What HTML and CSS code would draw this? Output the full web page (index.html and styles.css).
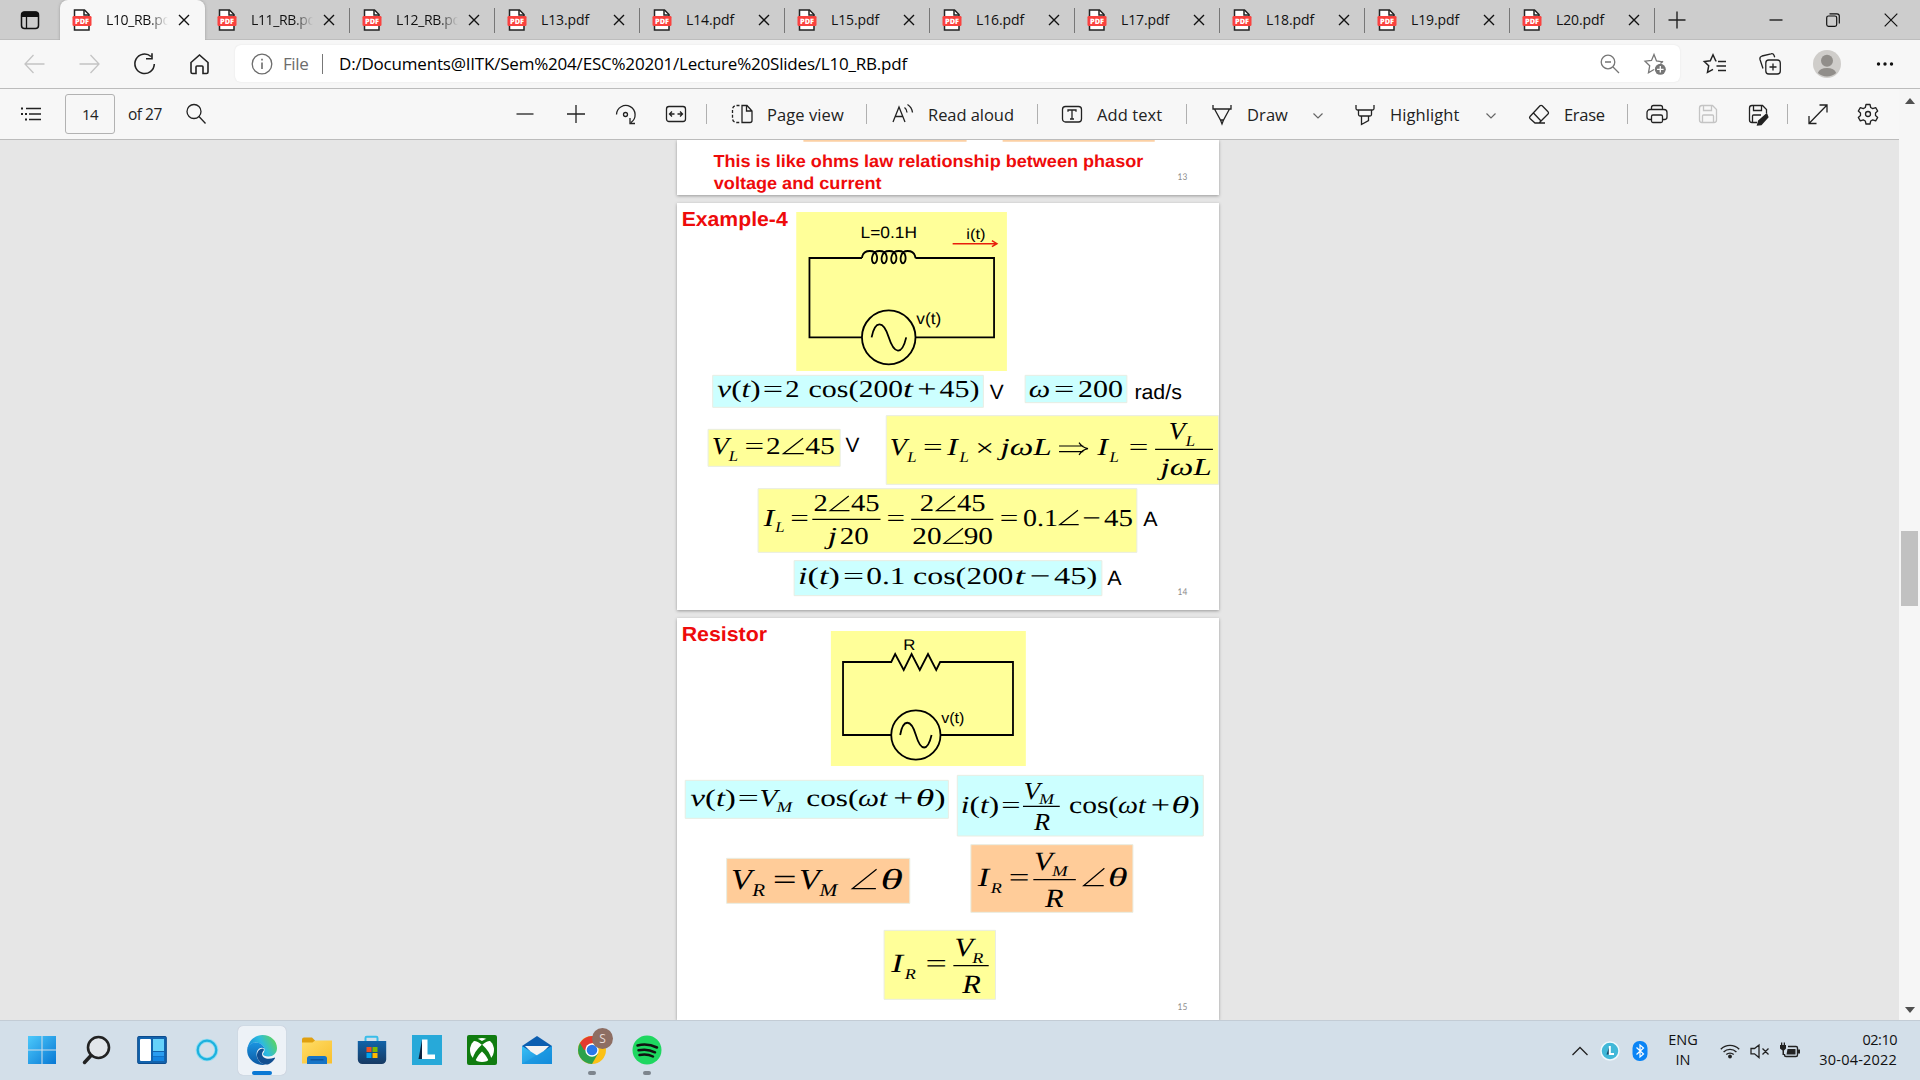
FILE: index.html
```html
<!DOCTYPE html>
<html lang="en">
<head>
<meta charset="utf-8">
<title>L10_RB.pdf</title>
<link rel="stylesheet" href="styles.css">
</head>
<body>
<svg class="defs" width="0" height="0">
  <defs>
    <symbol id="pdf" viewBox="0 0 20 22">
      <path d="M2.500 1h10l4.500 4.500V21H2.500z" fill="#fff" stroke="#222" stroke-width="1.500"/>
      <path d="M12 1v5h5" fill="none" stroke="#222" stroke-width="1.500"/>
      <rect x=".5" y="7" width="19" height="10" rx="1.200" fill="#f9423f"/>
      <text x="3" y="14.800" class="pdf-mark" textLength="14" lengthAdjust="spacingAndGlyphs">PDF</text>
    </symbol>
    <symbol id="x" viewBox="0 0 12 12"><path d="M1 1l10 10M11 1L1 11" stroke="#111" stroke-width="1.400"/></symbol>
    <symbol id="chev" viewBox="0 0 12 8"><path d="M1.500 1.500L6 6l4.500-4.500" fill="none" stroke="#666" stroke-width="1.200"/></symbol>
    <linearGradient id="win" x1="0" y1="0" x2="1" y2="1"><stop offset="0" stop-color="#4cc9fb"/><stop offset="1" stop-color="#0878d4"/></linearGradient>
    <linearGradient id="edgeA" x1="0" y1=".6" x2="1" y2="0.200"><stop offset="0" stop-color="#1686d6"/><stop offset=".5" stop-color="#2cbbe0"/><stop offset="1" stop-color="#62d84e"/></linearGradient>
    <linearGradient id="edgeB" x1="0" y1="0" x2="0" y2="1"><stop offset="0" stop-color="#1a94e0"/><stop offset="1" stop-color="#0c59a4"/></linearGradient>
    <linearGradient id="fold" x1="0" y1="0" x2="1" y2="1"><stop offset="0" stop-color="#ffdd68"/><stop offset="1" stop-color="#f9bf2c"/></linearGradient>
    <linearGradient id="bag" x1="0" y1="0" x2="0" y2="1"><stop offset="0" stop-color="#1163a8"/><stop offset="1" stop-color="#173a63"/></linearGradient>
    <linearGradient id="mail" x1="0" y1="0" x2="1" y2="1"><stop offset="0" stop-color="#38c0f5"/><stop offset="1" stop-color="#1286d8"/></linearGradient>
  </defs>
</svg>

<header class="tabstrip">
  <div class="tab-actions"><svg width="20" height="20" viewBox="0 0 20 20"><rect x="1.500" y="2" width="17" height="16.500" rx="3" fill="none" stroke="#111" stroke-width="1.500"/><path d="M1.500 7V4.500a3 3 0 0 1 3-3h11a3 3 0 0 1 3 3V7z" fill="#111"/><path d="M6.500 7v11" stroke="#111" stroke-width="1.300"/></svg></div>
  <div class="tab active"><svg class="fav"><use href="#pdf"/></svg><span class="fade">L10_RB.pdf</span><svg class="close"><use href="#x"/></svg></div>
  <div class="tab"><svg class="fav"><use href="#pdf"/></svg><span class="fade">L11_RB.pdf</span><svg class="close"><use href="#x"/></svg></div>
  <div class="tab"><svg class="fav"><use href="#pdf"/></svg><span class="fade">L12_RB.pdf</span><svg class="close"><use href="#x"/></svg></div>
  <div class="tab"><svg class="fav"><use href="#pdf"/></svg><span>L13.pdf</span><svg class="close"><use href="#x"/></svg></div>
  <div class="tab"><svg class="fav"><use href="#pdf"/></svg><span>L14.pdf</span><svg class="close"><use href="#x"/></svg></div>
  <div class="tab"><svg class="fav"><use href="#pdf"/></svg><span>L15.pdf</span><svg class="close"><use href="#x"/></svg></div>
  <div class="tab"><svg class="fav"><use href="#pdf"/></svg><span>L16.pdf</span><svg class="close"><use href="#x"/></svg></div>
  <div class="tab"><svg class="fav"><use href="#pdf"/></svg><span>L17.pdf</span><svg class="close"><use href="#x"/></svg></div>
  <div class="tab"><svg class="fav"><use href="#pdf"/></svg><span>L18.pdf</span><svg class="close"><use href="#x"/></svg></div>
  <div class="tab"><svg class="fav"><use href="#pdf"/></svg><span>L19.pdf</span><svg class="close"><use href="#x"/></svg></div>
  <div class="tab"><svg class="fav"><use href="#pdf"/></svg><span>L20.pdf</span><svg class="close"><use href="#x"/></svg></div>
  <div class="new-tab"><svg width="18" height="18" viewBox="0 0 18 18"><path d="M9 .5v17M.5 9h17" stroke="#222" stroke-width="1.400"/></svg></div>
  <div class="window-buttons">
    <svg width="14" height="14" viewBox="0 0 14 14"><path d="M.5 7h13" stroke="#111" stroke-width="1.300"/></svg>
    <svg width="14" height="14" viewBox="0 0 14 14"><rect x=".7" y="3" width="10" height="10.300" rx="1.800" fill="none" stroke="#111" stroke-width="1.200"/><path d="M3.500.8H11a2.300 2.300 0 0 1 2.300 2.300v7.400" fill="none" stroke="#111" stroke-width="1.200"/></svg>
    <svg width="14" height="14" viewBox="0 0 14 14"><path d="M.7.700l12.600 12.600M13.300.7L.7 13.300" stroke="#111" stroke-width="1.200"/></svg>
  </div>
</header>

<nav class="navbar">
  <div class="nav-buttons">
    <svg viewBox="0 0 24 24" class="dim"><path d="M22 12H2.500M11 3L2.500 12 11 21"/></svg>
    <svg viewBox="0 0 24 24" class="dim"><path d="M2 12h19.500M13 3l8.500 9-8.500 9"/></svg>
    <svg viewBox="0 0 24 24"><path d="M18.500 4.500A9.700 9.700 0 1 0 21.800 12M13.500 6.800h6V1.300" stroke-width="1.600"/></svg>
    <svg viewBox="0 0 24 24"><path d="M3.500 10.500L12 3l8.500 7.500V20a1.500 1.500 0 0 1-1.500 1.500h-3.500V15a1 1 0 0 0-1-1h-5a1 1 0 0 0-1 1v6.500H5A1.500 1.500 0 0 1 3.500 20z" stroke-width="1.600"/></svg>
  </div>
  <div class="url-box">
    <svg viewBox="0 0 24 24" class="info"><circle cx="12" cy="12" r="9.800"/><path d="M12 10.500v6.500M12 6.800v1.600" stroke-width="1.600"/></svg>
    <span class="scheme">File</span><i class="bar"></i>
    <span class="url">D:/Documents@IITK/Sem%204/ESC%20201/Lecture%20Slides/L10_RB.pdf</span>
    <svg viewBox="0 0 24 24" class="zoom-icon"><circle cx="10" cy="10" r="6.800"/><path d="M15 15l6 6M7 10h6"/></svg>
    <svg viewBox="0 0 24 24" class="star-icon"><path d="M19.500 9.800l-6-.9L11 2.500 8.500 8.400l-6.500.8 4.700 4.600-1.200 7L11 17.500"/><path d="M20 9.300l-2.500 2.200"/><circle cx="17.300" cy="17.300" r="5.500" fill="#767676" stroke="none"/><path d="M17.300 14v6.600M14 17.300h6.600" stroke="#fff"/></svg>
  </div>
  <div class="nav-tools">
    <svg viewBox="0 0 24 24"><path d="M13.500 9.200l-.8-.4L10 2.800 7.300 8.700l-6 .8 4.400 4.300-1.200 6.500L10 17.300M15 9.500h8M13.500 14H23M15 18.500h8" stroke-width="1.500"/></svg>
    <svg viewBox="0 0 24 24"><rect x="7.800" y="8" width="14.500" height="14" rx="3"/><path d="M15 11.500v7M11.500 15h7M5 16.500L2 7.500A3 3 0 0 1 4 4l9-2.200a2.500 2.500 0 0 1 3 1.500l.7 2" /></svg>
    <svg viewBox="0 0 28 28" class="avatar"><circle cx="14" cy="14" r="14" fill="#cfcdca" stroke="none"/><circle cx="14" cy="10.800" r="6" fill="#918e8a" stroke="none"/><path d="M4.800 23a9.500 6.500 0 0 1 18.400 0A14 14 0 0 1 4.800 23z" fill="#918e8a" stroke="none"/></svg>
    <svg viewBox="0 0 24 24"><g fill="#111" stroke="none"><circle cx="5.500" cy="12" r="1.700"/><circle cx="12" cy="12" r="1.700"/><circle cx="18.500" cy="12" r="1.700"/></g></svg>
  </div>
</nav>

<main class="viewer">
  <div class="reader">
    <div class="toolbar">
      <svg viewBox="0 0 24 24"><path d="M7 6.500h15M10 12h12M10 17.500h12"/><path d="M2 6.500h2M2 12h2M6 12h2M6 17.500h2" stroke-width="2"/></svg>
      <div class="page-no">14</div>
      <span class="of">of 27</span>
      <svg viewBox="0 0 24 24"><circle cx="10" cy="9.500" r="7"/><path d="M15 14.500l6.500 7"/></svg>
      <i></i>
      <svg viewBox="0 0 24 24"><path d="M3.500 12h17"/></svg>
      <svg viewBox="0 0 24 24"><path d="M3 12h18M12 3v18"/></svg>
      <svg viewBox="0 0 24 24"><path d="M2.500 12.500a9.300 9.300 0 1 1 14.500 8M21 21.500h-5V16"/><circle cx="11.500" cy="12.500" r="2"/></svg>
      <svg viewBox="0 0 24 24"><rect x="2.500" y="4.500" width="19" height="15" rx="2.500"/><path d="M5.500 12h5M13.500 12h5M8 9.500L5.500 12 8 14.500M16 9.500l2.500 2.500-2.500 2.500"/></svg>
      <b></b>
      <div class="tool pv"><svg viewBox="0 0 24 24"><path d="M12 3.500h5l5 5.500v9.500a2 2 0 0 1-2 2h-8zM16.500 4v5H22"/><path d="M9.500 3.500h-3a4 4 0 0 0-4 4v9a4 4 0 0 0 4 4h3" stroke-dasharray="3 1.800"/></svg><span>Page view</span></div>
      <b></b>
      <div class="tool ra"><svg viewBox="0 0 24 24"><path d="M2 20L8 5l6 15M4.200 14.500h7.600M13.500 5.500a6 6 0 0 1 2.500 5M16.500 2.500a11 11 0 0 1 5 8"/></svg><span>Read aloud</span></div>
      <b></b>
      <div class="tool at"><svg viewBox="0 0 24 24"><rect x="2.500" y="4.500" width="19" height="15.500" rx="3"/><path d="M8 9.800V8h8v1.800M12 8v9M10 17h4"/></svg><span>Add text</span></div>
      <b></b>
      <div class="tool dr"><svg viewBox="0 0 24 24"><path d="M3 3v4h18V3M4.500 7l6 11h3l6-11M10.500 18l1.500 4 1.500-4"/></svg><span>Draw</span></div>
      <svg class="chev"><use href="#chev"/></svg>
      <div class="tool hl"><svg viewBox="0 0 24 24"><path d="M3 3v3.500q0 1.500 1.500 1.500h15q1.500 0 1.500-1.500V3M5.500 8v4.500q0 1.500 1.500 1.500h10q1.500 0 1.500-1.500V8M8.500 14v8.500l7-4V14"/></svg><span>Highlight</span></div>
      <svg class="chev"><use href="#chev"/></svg>
      <div class="tool er"><svg viewBox="0 0 24 24"><path d="M3 14.500L13 3.800a1.500 1.500 0 0 1 2.200 0l5.800 6a1.500 1.500 0 0 1 0 2.200L12 21H8l-5-4.500a1.500 1.500 0 0 1 0-2zM6.500 11l7.500 8M8 21h10"/></svg><span>Erase</span></div>
      <b></b>
      <svg viewBox="0 0 24 24"><path d="M6.500 7.500v-2a2 2 0 0 1 2-2h7a2 2 0 0 1 2 2v2M6.500 17.500h-2a2.500 2.500 0 0 1-2.500-2.500v-4.500a3 3 0 0 1 3-3h14a3 3 0 0 1 3 3V15a2.500 2.500 0 0 1-2.500 2.500h-2"/><rect x="6.500" y="13" width="11" height="7.500" rx="1.500"/></svg>
      <svg viewBox="0 0 24 24" class="dim"><path d="M3.500 6a2.500 2.500 0 0 1 2.500-2.500h10.500l4 4V18a2.500 2.500 0 0 1-2.500 2.500H6A2.500 2.500 0 0 1 3.500 18zM7.500 3.500v5h8v-5M6.500 20.500V14a1 1 0 0 1 1-1h9a1 1 0 0 1 1 1v6.500"/></svg>
      <svg viewBox="0 0 24 24"><path d="M11 20.500H6A2.500 2.500 0 0 1 3.500 18V6A2.500 2.500 0 0 1 6 3.500h10.500l4 4V11M7.500 3.500v5h8v-5M6.500 20.500V14a1 1 0 0 1 1-1H15"/><path d="M20.500 12.500L13 19l-1 3.500 3-.3 6.500-7.200z" fill="#222" stroke-width="2"/></svg>
      <b></b>
      <svg viewBox="0 0 24 24"><path d="M3 21.500L21 3M13.500 3H21v7.500M3 14v7.500h7.500"/></svg>
      <svg viewBox="0 0 24 24"><path d="M10 2.500h4l.7 3 2 1.100 3-1 2 3.500-2.200 2v2.300l2.200 2-2 3.500-3-1-2 1.100-.7 3h-4l-.7-3-2-1.100-3 1-2-3.500 2.200-2v-2.300l-2.200-2 2-3.500 3 1 2-1.100z" stroke-linejoin="round"/><circle cx="12" cy="12" r="2.500"/></svg>
    </div>

    <div class="pages">
      <section class="slide s13">
        <svg viewBox="20 15 1518 165" preserveAspectRatio="none">
          <path d="M374 15h457v5H374zM932 15h426v5H932z" fill="#fcd0a4"/>
          <g class="red" font-size="52">
            <text x="122" y="95" textLength="1204" lengthAdjust="spacingAndGlyphs">This is like ohms law relationship between phasor</text>
            <text x="123" y="161" textLength="470" lengthAdjust="spacingAndGlyphs">voltage and current</text>
          </g>
          <text class="num" x="1422" y="135" textLength="27" lengthAdjust="spacingAndGlyphs">13</text>
        </svg>
      </section>

      <section class="slide s14">
        <svg viewBox="20 204 1518 1221" preserveAspectRatio="none">
          <text class="red" font-size="61" x="33" y="273" textLength="297" lengthAdjust="spacingAndGlyphs">Example-4</text>
          <rect class="y" x="354" y="231" width="590" height="477"/>
          <g class="sans">
            <text font-size="49" x="534" y="309" textLength="158" lengthAdjust="spacingAndGlyphs">L=0.1H</text>
            <text font-size="44" x="830" y="313" textLength="54" lengthAdjust="spacingAndGlyphs">i(t)</text>
            <text font-size="49" x="690" y="568" textLength="70" lengthAdjust="spacingAndGlyphs">v(t)</text>
          </g>
          <path class="wire arrow" d="M792 326H915M902 317L916 326 902 335"/>
          <path class="wire" d="M538 369H391V607H538M688 607H908V369H688M538 369C540 352 550 348 560 348C588 348 582 385 573 385C562 385 562 348 587 348C615 348 609 385 600 385C589 385 589 348 614 348C642 348 636 385 627 385C616 385 616 348 641 348C667 348 662 385 653 385C643 385 642 348 666 348C678 348 686 354 688 369M565 607C575 555 598 556 613 607S650 662 662 607"/>
          <ellipse class="wire" cx="613" cy="607" rx="75" ry="81"/>

          <g transform="translate(0 690)" class="math">
            <rect class="c" x="120" y="31" width="758" height="96"/>
            <text x="133" y="97" textLength="121" lengthAdjust="spacingAndGlyphs"><tspan class="i">v</tspan>(<tspan class="i">t</tspan>)</text>
            <text x="260" y="97" textLength="57" lengthAdjust="spacingAndGlyphs">=</text>
            <text x="323" y="97" textLength="40" lengthAdjust="spacingAndGlyphs">2</text>
            <text x="388" y="97" textLength="140" lengthAdjust="spacingAndGlyphs">cos(</text>
            <text x="529" y="97" textLength="124" lengthAdjust="spacingAndGlyphs">200</text>
            <text class="i" x="653" y="97" textLength="28" lengthAdjust="spacingAndGlyphs">t</text>
            <text x="693" y="97" textLength="54" lengthAdjust="spacingAndGlyphs">+</text>
            <text x="755" y="97" textLength="112" lengthAdjust="spacingAndGlyphs">45)</text>
            <text class="sans" font-size="62" x="896" y="102" textLength="39" lengthAdjust="spacingAndGlyphs">V</text>
            <rect class="c" x="995" y="31" width="285" height="82"/>
            <text class="i" x="1005" y="97" textLength="60" lengthAdjust="spacingAndGlyphs">ω</text>
            <text x="1076" y="97" textLength="57" lengthAdjust="spacingAndGlyphs">=</text>
            <text x="1143" y="97" textLength="126" lengthAdjust="spacingAndGlyphs">200</text>
            <text class="sans" font-size="62" x="1301" y="102" textLength="133" lengthAdjust="spacingAndGlyphs">rad/s</text>

            <rect class="y" x="107" y="193" width="370" height="111"/>
            <text class="i" x="117" y="268" textLength="48" lengthAdjust="spacingAndGlyphs">V</text><text class="i sub" x="165" y="287" textLength="26" lengthAdjust="spacingAndGlyphs">L</text>
            <text x="209" y="268" textLength="55" lengthAdjust="spacingAndGlyphs">=</text><text x="269" y="268" textLength="41" lengthAdjust="spacingAndGlyphs">2</text>
            <path class="ang" d="M373 220L318 266H375"/>
            <text x="379" y="268" textLength="83" lengthAdjust="spacingAndGlyphs">45</text>
            <text class="sans" font-size="62" x="492" y="262" textLength="39" lengthAdjust="spacingAndGlyphs">V</text>

            <rect class="y" x="606" y="152" width="931" height="206"/>
            <text class="i" x="616" y="271" textLength="48" lengthAdjust="spacingAndGlyphs">V</text><text class="i sub" x="665" y="291" textLength="26" lengthAdjust="spacingAndGlyphs">L</text>
            <text x="709" y="271" textLength="55" lengthAdjust="spacingAndGlyphs">=</text>
            <text class="i" x="776" y="271" textLength="30" lengthAdjust="spacingAndGlyphs">I</text><text class="i sub" x="811" y="291" textLength="26" lengthAdjust="spacingAndGlyphs">L</text>
            <text x="855" y="273" textLength="53" lengthAdjust="spacingAndGlyphs">×</text>
            <text class="i" x="926" y="271" textLength="144" lengthAdjust="spacingAndGlyphs">jωL</text>
            <path class="ang" d="M1090 243H1158M1090 260H1158M1146 233Q1154 247 1171 251Q1154 255 1146 270"/>
            <text class="i" x="1197" y="271" textLength="30" lengthAdjust="spacingAndGlyphs">I</text><text class="i sub" x="1231" y="291" textLength="26" lengthAdjust="spacingAndGlyphs">L</text>
            <text x="1285" y="271" textLength="55" lengthAdjust="spacingAndGlyphs">=</text>
            <path class="ang" d="M1359 253H1521"/>
            <text class="i" x="1397" y="222" textLength="46" lengthAdjust="spacingAndGlyphs">V</text><text class="i sub" x="1445" y="243" textLength="26" lengthAdjust="spacingAndGlyphs">L</text>
            <text class="i" x="1374" y="331" textLength="144" lengthAdjust="spacingAndGlyphs">jωL</text>

            <rect class="y" x="247" y="371" width="1061" height="191"/>
            <text class="i" x="262" y="482" textLength="30" lengthAdjust="spacingAndGlyphs">I</text><text class="i sub" x="295" y="501" textLength="26" lengthAdjust="spacingAndGlyphs">L</text>
            <text x="337" y="482" textLength="52" lengthAdjust="spacingAndGlyphs">=</text>
            <path class="ang" d="M399 463H590M676 463H906M501 393L449 437H503M798 393L747 437H800M821 490L768 535H822M1143 436L1092 479H1145"/>
            <text x="402" y="439" textLength="40" lengthAdjust="spacingAndGlyphs">2</text><text x="507" y="439" textLength="80" lengthAdjust="spacingAndGlyphs">45</text>
            <text class="i" x="442" y="536" textLength="26" lengthAdjust="spacingAndGlyphs">j</text><text x="476" y="536" textLength="81" lengthAdjust="spacingAndGlyphs">20</text>
            <text x="607" y="482" textLength="52" lengthAdjust="spacingAndGlyphs">=</text>
            <text x="700" y="439" textLength="40" lengthAdjust="spacingAndGlyphs">2</text><text x="804" y="439" textLength="80" lengthAdjust="spacingAndGlyphs">45</text>
            <text x="679" y="536" textLength="82" lengthAdjust="spacingAndGlyphs">20</text><text x="823" y="536" textLength="82" lengthAdjust="spacingAndGlyphs">90</text>
            <text x="924" y="482" textLength="52" lengthAdjust="spacingAndGlyphs">=</text>
            <text x="989" y="482" textLength="98" lengthAdjust="spacingAndGlyphs">0.1</text>
            <text x="1155" y="482" textLength="52" lengthAdjust="spacingAndGlyphs">−</text><text x="1216" y="482" textLength="81" lengthAdjust="spacingAndGlyphs">45</text>
            <text class="sans" font-size="62" x="1326" y="483" textLength="40" lengthAdjust="spacingAndGlyphs">A</text>

            <rect class="c" x="348" y="587" width="862" height="105"/>
            <text x="359" y="657" textLength="117" lengthAdjust="spacingAndGlyphs"><tspan class="i">i</tspan>(<tspan class="i">t</tspan>)</text>
            <text x="485" y="657" textLength="59" lengthAdjust="spacingAndGlyphs">=</text>
            <text x="550" y="657" textLength="110" lengthAdjust="spacingAndGlyphs">0.1</text>
            <text x="681" y="657" textLength="149" lengthAdjust="spacingAndGlyphs">cos(</text><text x="831" y="657" textLength="131" lengthAdjust="spacingAndGlyphs">200</text>
            <text class="i" x="966" y="657" textLength="29" lengthAdjust="spacingAndGlyphs">t</text>
            <text x="1008" y="657" textLength="58" lengthAdjust="spacingAndGlyphs">−</text><text x="1076" y="657" textLength="121" lengthAdjust="spacingAndGlyphs">45)</text>
            <text class="sans" font-size="62" x="1225" y="660" textLength="40" lengthAdjust="spacingAndGlyphs">A</text>
            <text class="num" x="1422" y="690" textLength="27" lengthAdjust="spacingAndGlyphs">14</text>
          </g>
        </svg>
      </section>

      <section class="slide s15">
        <svg viewBox="20 39 1518 1206" preserveAspectRatio="none">
          <text class="red" font-size="61" x="33" y="108" textLength="239" lengthAdjust="spacingAndGlyphs">Resistor</text>
          <rect class="y" x="451" y="78" width="546" height="405"/>
          <g class="sans" font-size="46">
            <text x="654" y="134" textLength="34" lengthAdjust="spacingAndGlyphs">R</text>
            <text x="760" y="355" textLength="65" lengthAdjust="spacingAndGlyphs">v(t)</text>
          </g>
          <path class="wire" d="M620 390H485V171H620L631 147 655 195 677 147 700 195 723 147 746 195 757 171H961V390H758M645 390C653 342 675 340 689 390S722 440 733 390"/>
          <ellipse class="wire" cx="689" cy="390" rx="69" ry="74"/>
          <g class="math">
            <rect class="c" x="43" y="526" width="737" height="114"/>
            <text x="58" y="604" textLength="127" lengthAdjust="spacingAndGlyphs"><tspan class="i">v</tspan>(<tspan class="i">t</tspan>)</text>
            <text x="190" y="604" textLength="59" lengthAdjust="spacingAndGlyphs">=</text>
            <text class="i" x="251" y="604" textLength="50" lengthAdjust="spacingAndGlyphs">V</text><text class="i sub" x="299" y="620" textLength="44" lengthAdjust="spacingAndGlyphs">M</text>
            <text x="382" y="604" textLength="146" lengthAdjust="spacingAndGlyphs">cos(</text><text class="i" x="527" y="604" textLength="82" lengthAdjust="spacingAndGlyphs">ωt</text>
            <text x="626" y="604" textLength="56" lengthAdjust="spacingAndGlyphs">+</text><text class="i" x="689" y="604" textLength="52" lengthAdjust="spacingAndGlyphs">θ</text><text x="741" y="604" textLength="31" lengthAdjust="spacingAndGlyphs">)</text>
            <rect class="c" x="805" y="511" width="689" height="182"/>
            <text x="815" y="624" textLength="107" lengthAdjust="spacingAndGlyphs"><tspan class="i">i</tspan>(<tspan class="i">t</tspan>)</text>
            <text x="928" y="624" textLength="54" lengthAdjust="spacingAndGlyphs">=</text>
            <path class="ang" d="M989 604H1092"/>
            <text class="i" x="991" y="581" textLength="46" lengthAdjust="spacingAndGlyphs">V</text><text class="i sub" x="1034" y="597" textLength="42" lengthAdjust="spacingAndGlyphs">M</text>
            <text class="i" x="1020" y="674" textLength="45" lengthAdjust="spacingAndGlyphs">R</text>
            <text x="1118" y="624" textLength="138" lengthAdjust="spacingAndGlyphs">cos(</text><text class="i" x="1255" y="624" textLength="78" lengthAdjust="spacingAndGlyphs">ωt</text>
            <text x="1347" y="624" textLength="54" lengthAdjust="spacingAndGlyphs">+</text><text class="i" x="1405" y="624" textLength="50" lengthAdjust="spacingAndGlyphs">θ</text><text x="1454" y="624" textLength="30" lengthAdjust="spacingAndGlyphs">)</text>
          </g>
          <g transform="translate(0 645)" class="math">
            <rect class="o" x="159" y="115" width="513" height="135"/>
            <g font-size="87">
              <text class="i big" x="171" y="207" textLength="58" lengthAdjust="spacingAndGlyphs">V</text><text class="i sub2" x="231" y="229" textLength="36" lengthAdjust="spacingAndGlyphs">R</text>
              <text class="big" x="288" y="207" textLength="67" lengthAdjust="spacingAndGlyphs">=</text>
              <text class="i big" x="362" y="207" textLength="58" lengthAdjust="spacingAndGlyphs">V</text><text class="i sub2" x="419" y="229" textLength="50" lengthAdjust="spacingAndGlyphs">M</text>
              <text class="i big" x="590" y="207" textLength="63" lengthAdjust="spacingAndGlyphs">θ</text>
            </g>
            <rect class="o" x="843" y="74" width="454" height="203"/>
            <path class="ang" d="M579 148L511 206H577M1018 179H1137M1217 145L1159 197H1215"/>
            <g font-size="79">
              <text class="i" x="862" y="199" textLength="32" lengthAdjust="spacingAndGlyphs">I</text><text class="i sub" x="899" y="219" textLength="31" lengthAdjust="spacingAndGlyphs">R</text>
              <text x="949" y="199" textLength="58" lengthAdjust="spacingAndGlyphs">=</text>
              <text class="i" x="1020" y="149" textLength="52" lengthAdjust="spacingAndGlyphs">V</text><text class="i sub" x="1070" y="168" textLength="44" lengthAdjust="spacingAndGlyphs">M</text>
              <text class="i" x="1051" y="261" textLength="52" lengthAdjust="spacingAndGlyphs">R</text>
              <text class="i" x="1227" y="199" textLength="55" lengthAdjust="spacingAndGlyphs">θ</text>
            </g>
            <rect class="y" x="600" y="331" width="312" height="207"/>
            <path class="ang" d="M794 437H893"/>
            <g font-size="79">
              <text class="i" x="620" y="457" textLength="33" lengthAdjust="spacingAndGlyphs">I</text><text class="i sub" x="658" y="477" textLength="31" lengthAdjust="spacingAndGlyphs">R</text>
              <text x="716" y="457" textLength="60" lengthAdjust="spacingAndGlyphs">=</text>
              <text class="i" x="797" y="407" textLength="52" lengthAdjust="spacingAndGlyphs">V</text><text class="i sub" x="847" y="429" textLength="31" lengthAdjust="spacingAndGlyphs">R</text>
              <text class="i" x="819" y="519" textLength="52" lengthAdjust="spacingAndGlyphs">R</text>
            </g>
            <text class="num" x="1422" y="570" textLength="27" lengthAdjust="spacingAndGlyphs">15</text>
          </g>
        </svg>
      </section>
    </div>
  </div>
  <aside class="scrollbar">
    <svg width="10" height="6" viewBox="0 0 10 6"><path d="M0 6L5 0l5 6z" fill="#505050"/></svg>
    <div class="thumb"></div>
    <svg width="10" height="6" viewBox="0 0 10 6"><path d="M0 0l5 6 5-6z" fill="#505050"/></svg>
  </aside>
</main>

<footer class="taskbar">
  <div class="apps">
    <div class="app"><svg viewBox="0 0 30 30"><path d="M1 1h13.500v13.500H1zM15.500 1H29v13.500H15.500zM1 15.500h13.500V29H1zM15.500 15.500H29V29H15.500z" fill="url(#win)"/></svg></div>
    <div class="app"><svg viewBox="0 0 30 30"><circle cx="16.500" cy="12.500" r="10.500" fill="#e2e6ea" stroke="#222" stroke-width="2.600"/><path d="M9 20.500L2.500 27.500" stroke="#222" stroke-width="3.500" stroke-linecap="round"/></svg></div>
    <div class="app"><svg viewBox="0 0 30 30"><rect x=".7" y="1.500" width="28.600" height="27" rx="1" fill="#1263ad" stroke="#0b4b8d"/><rect x="3" y="4" width="11" height="22" rx="1" fill="#fff"/><path d="M16 4h11v12H16z" fill="#66d2fa"/><path d="M16 17h11v4H16z" fill="#2a9df0"/><path d="M16 21.500h11V26H16z" fill="#1384e0"/></svg></div>
    <div class="app"><svg viewBox="0 0 30 30"><circle cx="15" cy="15" r="9.300" fill="none" stroke="#8fdcf2" stroke-width="4"/><circle cx="15" cy="15" r="9.300" fill="none" stroke="#1cb1de" stroke-width="2.200"/></svg></div>
    <div class="app current"><svg viewBox="0 0 30 30"><path d="M.3 14C1.500 5.500 8 0 15.500 0 24 0 30 6 30 13c0 5.500-4 8.500-8.500 8.500-4 0-6-1.600-5.400-3 .8-1.200 1.400-2 1.400-4 0-4-4.500-7-9-7-4 0-7 3-8.200 6.500z" fill="url(#edgeA)"/><path d="M.2 14.500C.5 10 5 7.300 9 7.500c4.500.2 8 3 8.400 6.200-4-2.700-8 1.300-7.800 5.800.2 5 3.500 9 9 10.100C9 31.500-.5 24 .2 14.500z" fill="url(#edgeB)"/><path d="M16 13.500c-5 0-8 6.500-4.500 11.500 3 4.500 8 5.500 11 3.700 2-1 4.300-3.300 5.400-5.300.3-.6-.2-1-.8-.7-6.500 2.800-12.600 0-12-4.200.2-1.800 1.900-2.700 1.900-3.700z" fill="#124f91"/></svg><em></em></div>
    <div class="app"><svg viewBox="0 0 30 30"><path d="M0 4.500A2 2 0 0 1 2 2.500h8l3 3V12H0z" fill="#e0a010"/><path d="M0 7.500h10.500L13 5.500h17V28.500H0z" fill="url(#fold)"/><path d="M5 29v-5.500A2.500 2.500 0 0 1 7.500 21h15a2.500 2.500 0 0 1 2.500 2.500V29z" fill="#1674c6"/><path d="M8.500 24.800h13" stroke="#0b4f93" stroke-width="1.200"/></svg></div>
    <div class="app"><svg viewBox="0 0 30 30"><path d="M8.500 7V3q0-1.200 1.200-1.200h9.600q1.200 0 1.200 1.200v4" fill="none" stroke="#39bde9" stroke-width="2"/><path d="M.8 6h28.400v18.500a4.500 4.500 0 0 1-4.500 4.500H5.300A4.500 4.500 0 0 1 .8 24.500z" fill="url(#bag)"/><path d="M9.500 12h5v5h-5z" fill="#f25022"/><path d="M15.500 12h5v5h-5z" fill="#7fba00"/><path d="M9.500 18h5v5h-5z" fill="#00a4ef"/><path d="M15.500 18h5v5h-5z" fill="#ffb900"/></svg></div>
    <div class="app"><svg viewBox="0 0 30 30"><path d="M0 0h30v30H0z" fill="#27a9d9"/><path d="M10 5L6.500 24H11z" fill="#0c2340"/><path d="M10 4.500h5.500v15H23V24H10z" fill="#fff"/></svg></div>
    <div class="app"><svg viewBox="0 0 30 30"><rect width="30" height="30" rx="2" fill="#107c10"/><circle cx="15" cy="15" r="12" fill="#fff"/><path d="M6.500 6Q10 5.500 15 10 20 5.500 23.500 6L21.500 3.600Q18 4 15 6 12 4 8.500 3.600zM15 9.500Q7 16.500 5.500 24.500L8 27Q10 21 15 16.500 20 21 22 27L24.500 24.500Q23 16.500 15 9.500z" fill="#107c10"/></svg></div>
    <div class="app"><svg viewBox="0 0 30 30"><path d="M0 11L15 1l15 10v5H0z" fill="#0c5eb0"/><path d="M3 11h24l-9 9h-6z" fill="#f3f3f3"/><path d="M0 11l15 9.500L30 11v18H0z" fill="url(#mail)"/><path d="M0 29l15-9L30 11v18z" fill="#1591df" opacity=".55"/></svg></div>
    <div class="app chrome"><svg viewBox="0 0 30 30"><circle cx="15" cy="15" r="14" fill="#fbc116"/><path d="M15 15L2.900 8A14 14 0 0 0 15 29l6-10.500z" fill="#2ba24c"/><path d="M2.900 8A14 14 0 0 1 27.100 8H15v7H7z" fill="#e33b2e"/><circle cx="15" cy="15" r="6.700" fill="#fff"/><circle cx="15" cy="15" r="5.300" fill="#2a78e8"/></svg><span class="badge">S</span><em class="idle"></em></div>
    <div class="app"><svg viewBox="0 0 30 30"><circle cx="15" cy="15" r="14.500" fill="#1ed760"/><path d="M5.500 10.500q10-2.500 19.500 2M6.500 15.300q9-2 16.500 2M7.500 20q7.500-1.500 13.500 1.500" fill="none" stroke="#111" stroke-width="2.500" stroke-linecap="round"/></svg><em class="idle"></em></div>
  </div>
  <div class="tray">
    <svg viewBox="0 0 20 20"><path d="M2.500 14L10 6.500l7.500 7.500" fill="none" stroke="#222" stroke-width="1.300"/></svg>
    <svg viewBox="0 0 20 20"><circle cx="10" cy="10" r="9" fill="#41b8d8" stroke="#eef8fc" stroke-width="1.500"/><path d="M9.500 5L6.500 13.500h3z" fill="#124a6a"/><path d="M8.800 5h2v7H14v2H8.800z" fill="#fff"/></svg>
    <svg viewBox="0 0 20 20"><rect x="2.500" width="15" height="20" rx="7" fill="#0a84f5"/><path d="M6.500 6.500l7 6.500-3.500 3V4l3.500 3-7 6.500" fill="none" stroke="#fff" stroke-width="1.200"/></svg>
    <div class="lang">ENG<br>IN</div>
    <svg viewBox="0 0 20 20"><path d="M.8 8.200a13 13 0 0 1 18.400 0M3.600 11a9 9 0 0 1 12.800 0M6.300 13.600a5.300 5.300 0 0 1 7.400 0" fill="none" stroke="#222" stroke-width="1.400"/><circle cx="10" cy="15.500" r="1.900" fill="#222"/></svg>
    <svg viewBox="0 0 20 20"><path d="M1 7.500h3.500L9 4v12.500l-4.500-3.700H1zM12.500 7.500l6 6M18.500 7.500l-6 6" fill="none" stroke="#222" stroke-width="1.300"/></svg>
    <svg viewBox="0 0 20 20"><path d="M8 5.500h8q1.500 0 1.500 1.500v7q0 1.500-1.500 1.500H6q-1.500 0-1.500-1.500v-1" fill="none" stroke="#222" stroke-width="1.400"/><path d="M7.500 8H15.500v5.500h-9zM18 8.500h2v4h-2zM0 4h1V1.500h1.300V4h1.400V1.500H5V4h1v3.500L4 9.500V14H2.500V9.500L0 7.500z" fill="#222"/></svg>
    <div class="clock"><span class="time">02:10</span><span>30-04-2022</span></div>
  </div>
</footer>
</body>
</html>
```

FILE: styles.css
```css
* { box-sizing: border-box; }
body {
  margin: 0;
  width: 1920px;
  height: 1080px;
  overflow: hidden;
  display: flex;
  flex-direction: column;
  background: #f7f7f7;
  font-family: "Open Sans", "Noto Sans", sans-serif;
  color: #111;
}
.defs { position: absolute; }
svg { flex: none; display: block; }

/* tab strip */
.tabstrip { height: 40px; display: flex; background: #cdcdcd; border-bottom: 1px solid #bdbdbd; }
.tab-actions { width: 60px; display: flex; align-items: center; justify-content: center; }
.tab { width: 145px; height: 40px; display: flex; align-items: center; padding-left: 12px; font-size: 14px; position: relative; }
.tab span { width: 62px; margin-left: 14px; padding-bottom: 1px; overflow: hidden; white-space: nowrap; letter-spacing: -.1px; }
.tab .fade { letter-spacing: -.35px; -webkit-mask-image: linear-gradient(90deg, #000 68%, transparent); mask-image: linear-gradient(90deg, #000 68%, transparent); }
.tab .fav { width: 20px; height: 22px; }
.tab .close { width: 12px; height: 12px; margin-left: 10px; }
.tab:not(.active)::after { content: ""; position: absolute; right: 0; top: 8px; width: 1px; height: 25px; background: #777; }
.active { background: #f7f7f7; border-radius: 8px 8px 0 0; box-shadow: 0 0 3px #999; clip-path: inset(0 -4px 0 -4px); }
.pdf-mark { font: 800 7.500px "Open Sans", sans-serif; fill: #fff; text-rendering: geometricPrecision; }
.new-tab { width: 44px; display: flex; align-items: center; justify-content: center; }
.window-buttons { margin-left: auto; width: 173px; display: flex; align-items: center; justify-content: space-around; }

/* address bar */
.navbar { height: 49px; display: flex; padding-top: 5px; border-bottom: 1px solid #bcbcbc; }
.navbar svg, .toolbar svg { width: 24px; height: 24px; fill: none; stroke: #222; stroke-width: 1.300; }
.navbar .dim, .toolbar .dim { stroke: #c4c4c4; }
.nav-buttons { width: 235px; height: 37px; padding-left: 7px; display: flex; align-items: center; }
.nav-buttons svg { width: 55px; }
.url-box { width: 1445px; height: 37px; background: #fff; border-radius: 6px; display: flex; align-items: center; font-size: 17px; box-shadow: 0 0 2px #e2e2e2; white-space: nowrap; }
.url-box .info { margin-left: 15px; stroke: #6c6c6c; }
.url-box .scheme { width: 39px; margin-left: 9px; color: #6c6c6c; letter-spacing: -.4px; }
.url-box .bar { width: 1px; height: 20px; background: #777; }
.url-box .url { flex: 1; margin-left: 16px; letter-spacing: -.2px; color: #000; }
.url-box .zoom-icon { margin-right: 21px; stroke: #767676; }
.url-box .star-icon { margin-right: 13px; stroke: #767676; }
.nav-tools { display: flex; align-items: center; height: 37px; padding-left: 7px; }
.nav-tools svg { width: 56px; }
.nav-tools svg:nth-child(2) { width: 54px; }
.nav-tools .avatar { height: 28px; width: 60px; }

/* pdf viewer */
.viewer { flex: 1; display: flex; min-height: 0; }
.reader { width: 1899px; display: flex; flex-direction: column; }
.toolbar {
  height: 51px;
  flex: none;
  display: grid;
  align-items: center;
  justify-items: center;
  grid-template-columns: 62px 56px 58px 40px 284px 50px 51px 50px 50px 10px 151px 9px 161px 10px 140px 9px 107px 39px 138px 32px 115px 10px 50px 51px 49px 11px 50px 50px;
  border-bottom: 1px solid #bcbcbc;
  font-size: 16.500px;
  color: #222;
}
.toolbar > b { width: 1px; height: 20px; background: #b0b0b0; }
.toolbar .chev { width: 12px; height: 8px; margin-top: 3px; }
.page-no { width: 50px; height: 40px; border: 1px solid #b2b2b2; border-radius: 3px; font-size: 15px; display: grid; place-items: center; letter-spacing: -.5px; }
.of { justify-self: start; padding-left: 10px; font-size: 15.500px; letter-spacing: -.5px; }
.tool { justify-self: start; display: flex; align-items: center; gap: 13px; white-space: nowrap; letter-spacing: .08px; }
.pv { padding-left: 19px; }
.ra { padding-left: 20px; letter-spacing: -.05px; }
.at { padding-left: 18px; }
.dr { padding-left: 19px; }
.hl { padding-left: 16px; }
.er { padding-left: 20px; letter-spacing: -.3px; }
.pages { flex: 1; min-height: 0; overflow: hidden; background: #e6e6e6; display: flex; flex-direction: column; align-items: center; gap: 8px; padding-right: 3px; }
.slide { width: 542px; flex: none; background: #fff; box-shadow: 0 1px 3px #999; }
.slide svg { width: 100%; height: 100%; text-rendering: geometricPrecision; }
.s13 { height: 55px; }
.s14 { height: 407px; }
.s15 { height: 402px; }
.red { font-family: "Liberation Sans", Arial, sans-serif; font-weight: 700; fill: #ee0b0b; }
.sans { font-family: "Liberation Sans", Arial, sans-serif; fill: #000; }
.num { font: 28px Lato, "Liberation Sans", sans-serif; fill: #8c8c8c; }
.math { font-family: "Liberation Serif", "Times New Roman", serif; font-size: 73px; fill: #000; }
.i { font-style: italic; }
.sub { font-size: 45px; }
.sub2 { font-size: 54px; }
.y { fill: #ffff99; }
.c { fill: #ccffff; }
.o { fill: #ffcc99; }
.math rect { stroke: #e9ede2; stroke-width: 1; vector-effect: non-scaling-stroke; }
.wire { fill: none; stroke: #000; stroke-width: 1.800; vector-effect: non-scaling-stroke; }
.arrow { stroke: #e81e0c; stroke-width: 1.500; }
.ang { fill: none; stroke: #000; stroke-width: 1.200; vector-effect: non-scaling-stroke; }

.scrollbar { width: 21px; background: #f6f6f6; display: flex; flex-direction: column; align-items: center; padding: 9px 0 7px; }
.thumb { width: 17px; height: 75px; margin: 427px 0 auto; background: #c1c1c1; }

/* taskbar */
.taskbar { height: 60px; flex: none; background: #d3dfe9; border-top: 1px solid #c3ccd5; display: flex; justify-content: space-between; }
.apps { display: flex; padding: 5px 0 0 14px; }
.app { width: 55px; height: 49px; position: relative; display: flex; justify-content: center; padding-top: 9px; }
.app svg { width: 30px; height: 30px; }
.current { width: 48px; margin: 0 3.500px; background: #edf2f7; border-radius: 5px; box-shadow: 0 0 1px #aab; }
.app em { position: absolute; bottom: 0; left: calc(50% - 10px); width: 20px; height: 4px; border-radius: 2px; background: #0a78d4; }
.app .idle { left: calc(50% - 4px); width: 8px; background: #7d858d; }
.badge { position: absolute; left: 28px; top: 2px; width: 21px; height: 21px; border-radius: 50%; background: #8d6e63; color: #e8dcd8; font-size: 12px; line-height: 21px; text-align: center; }
.tray { display: flex; align-items: center; padding-right: 23px; font-size: 14.500px; line-height: 20px; }
.tray svg { width: 20px; height: 20px; margin-right: 10px; }
.lang { width: 46px; margin: 0 14px 0 0; padding-bottom: 2px; text-align: center; }
.clock { width: 87px; padding-bottom: 2px; display: flex; flex-direction: column; align-items: flex-end; letter-spacing: .2px; }
.time { letter-spacing: -.5px; }
```
